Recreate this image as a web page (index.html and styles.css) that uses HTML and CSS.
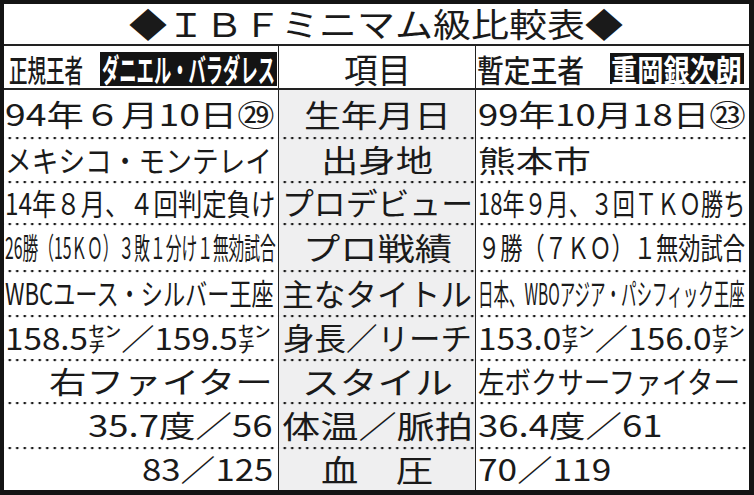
FILE: index.html
```html
<!DOCTYPE html>
<html lang="ja">
<head>
<meta charset="utf-8">
<title>IBFミニマム級比較表</title>
<link rel="stylesheet" href="styles.css">
<script src="fit.js" defer></script>
</head>
<body>
<div class="board">
  <div class="title"><div class="f w-title"><span>◆ＩＢＦミニマム級比較表◆</span></div></div>

  <div class="row head">
    <div class="cell l">
      <div class="f lbl w-lbl1"><span>正規王者</span></div>
      <div class="name name-l"><div class="f w-name1"><span>ダニエル・バラダレス</span></div></div>
    </div>
    <div class="cell m white">
      <div class="f item w-item"><span>項目</span></div>
    </div>
    <div class="cell r">
      <div class="f lbl w-lbl2"><span>暫定王者</span></div>
      <div class="name name-r"><div class="f w-name2"><span>重岡銀次朗</span></div></div>
    </div>
  </div>

  <div class="row r1">
    <div class="cell l"><div class="f w270"><span>94年６月10日㉙</span></div></div>
    <div class="cell m"><div class="f w147"><span>生年月日</span></div></div>
    <div class="cell r"><div class="f w268"><span>99年10月18日㉓</span></div></div>
  </div>

  <div class="row r2 dot">
    <div class="cell l"><div class="f w267"><span>メキシコ・モンテレイ</span></div></div>
    <div class="cell m"><div class="f w112"><span>出身地</span></div></div>
    <div class="cell r"><div class="f w113"><span>熊本市</span></div></div>
  </div>

  <div class="row r3 dot">
    <div class="cell l"><div class="f w270"><span>14年８月、４回判定負け</span></div></div>
    <div class="cell m"><div class="f w191"><span>プロデビュー</span></div></div>
    <div class="cell r"><div class="f w267"><span>18年９月、３回ＴＫＯ勝ち</span></div></div>
  </div>

  <div class="row r4 dot">
    <div class="cell l"><div class="f w271"><span>26勝（15ＫＯ）３敗１分け１無効試合</span></div></div>
    <div class="cell m"><div class="f w149"><span>プロ戦績</span></div></div>
    <div class="cell r"><div class="f w267"><span>９勝（７ＫＯ）１無効試合</span></div></div>
  </div>

  <div class="row r5 dot">
    <div class="cell l"><div class="f w269"><span>WBCユース・シルバー王座</span></div></div>
    <div class="cell m"><div class="f w190"><span>主なタイトル</span></div></div>
    <div class="cell r"><div class="f w267"><span>日本、WBOアジア・パシフィック王座</span></div></div>
  </div>

  <div class="row r6 dot">
    <div class="cell l"><div class="f w266"><span>158.5㌢／159.5㌢</span></div></div>
    <div class="cell m"><div class="f w189"><span>身長／リーチ</span></div></div>
    <div class="cell r"><div class="f w267"><span>153.0㌢／156.0㌢</span></div></div>
  </div>

  <div class="row r7 dot">
    <div class="cell l end"><div class="f w224"><span>右ファイター</span></div></div>
    <div class="cell m"><div class="f w151"><span>スタイル</span></div></div>
    <div class="cell r"><div class="f w262"><span>左ボクサーファイター</span></div></div>
  </div>

  <div class="row r8 dot">
    <div class="cell l end"><div class="f w185"><span>35.7度／56</span></div></div>
    <div class="cell m"><div class="f w191"><span>体温／脈拍</span></div></div>
    <div class="cell r"><div class="f w185"><span>36.4度／61</span></div></div>
  </div>

  <div class="row r9 dot">
    <div class="cell l end"><div class="f w131"><span>83／125</span></div></div>
    <div class="cell m"><div class="f w112"><span>血　圧</span></div></div>
    <div class="cell r"><div class="f w133"><span>70／119</span></div></div>
  </div>
</div>
</body>
</html>
```

FILE: styles.css
```css
* { box-sizing: border-box; }

html, body {
  margin: 0;
  padding: 0;
  background: #141414;
}

body {
  width: 754px;
  height: 495px;
  font-family: "Noto Sans CJK JP", "Noto Sans", sans-serif;
  color: #1a1a1a;
}

.board {
  margin: 4px 0 0 4px;
  width: 745px;
  height: 486px;
  background: #fff;
  display: flex;
  flex-direction: column;
}

/* fitted lettering: the wrapper fixes the length, the line inside is
   squeezed or stretched horizontally (newspaper 長体 / 平体) */
.f {
  display: block;
  flex: none;
  white-space: nowrap;
  line-height: 1.15;
}
.f > span {
  display: block;
  width: max-content;
  transform-origin: 0 50%;
}

.title {
  height: 42px;
  border-bottom: 2px solid #222;
  display: flex;
  align-items: center;
  justify-content: center;
  font-size: 33px;
  padding-right: 2px;
}

.row {
  display: grid;
  grid-template-columns: 274px 197px 274px;
  flex: none;
}

.cell {
  display: flex;
  align-items: center;
  font-size: 30px;
  min-width: 0;
}
.cell.l { padding: 0 3px 0 1px; justify-content: flex-start; }
.cell.l.end { justify-content: flex-end; padding-right: 5px; }
.cell.m {
  border-left: 1px solid #222;
  background-color: #efeff0;
  justify-content: center;
  font-size: 31px;
}
.cell.m.white { background-color: #fff; }
.cell.r {
  border-left: 1px solid #222;
  padding-left: 2px;
  justify-content: flex-start;
}

.dot .cell {
  background-image: radial-gradient(circle at 50% 50%, #1a1a1a 1.15px, rgba(0,0,0,0) 1.65px);
  background-size: 7.5px 4px;
  background-repeat: repeat-x;
  background-position: 2px -1px;
}

/* header row */
.head { height: 44px; border-bottom: 2px solid #222; }
.head .cell { padding-top: 3px; }
.head .cell.l { padding-left: 5px; }
.head .cell.r { padding-left: 1px; }
.lbl { font-size: 31px; font-weight: 500; }
.item { font-size: 34px; }
.name {
  display: flex;
  align-items: center;
  justify-content: flex-start;
  flex: none;
  padding-left: 2px;
  background: #141414;
  color: #fff;
  font-weight: 700;
}
.name-l { width: 177px; height: 34px; margin-left: 17px; font-size: 32px; }
.name-r { width: 134px; height: 31px; margin-left: 26px; font-size: 31px; padding-left: 1px; }

/* row heights */
.r1 { height: 47px; }
.r2 { height: 44px; }
.r3 { height: 42px; }
.r4 { height: 47px; }
.r5 { height: 45px; }
.r6 { height: 44px; }
.r7 { height: 43px; }
.r8 { height: 45px; }
.r9 { height: 43px; }

/* lengths of each line of lettering */
.w-title { width: 494px; }
.w-lbl1 { width: 74px; }
.w-lbl2 { width: 107px; }
.w-name1 { width: 173px; }
.w-name2 { width: 131px; }
.w-item { width: 67px; }
.w112 { width: 112px; }
.w113 { width: 113px; }
.w131 { width: 131px; }
.w133 { width: 133px; }
.w147 { width: 147px; }
.w149 { width: 149px; }
.w151 { width: 151px; }
.w185 { width: 185px; }
.w189 { width: 189px; }
.w190 { width: 190px; }
.w191 { width: 191px; }
.w224 { width: 224px; }
.w262 { width: 262px; }
.w266 { width: 266px; }
.w267 { width: 267px; }
.w268 { width: 268px; }
.w269 { width: 269px; }
.w270 { width: 270px; }
.w271 { width: 271px; }
```

FILE: fit.js
```js
(function () {
  function fit() {
    var boxes = document.querySelectorAll('.f');
    for (var i = 0; i < boxes.length; i++) {
      var w = boxes[i];
      var t = w.firstElementChild;
      if (!t) continue;
      t.style.transform = 'none';
      var nat = t.offsetWidth;
      var target = w.clientWidth;
      if (nat > 0) {
        t.style.transform = 'scaleX(' + (target / nat).toFixed(4) + ')';
      }
    }
  }
  fit();
  if (document.fonts && document.fonts.ready) {
    document.fonts.ready.then(fit);
  }
  window.addEventListener('load', fit);
})();
```
